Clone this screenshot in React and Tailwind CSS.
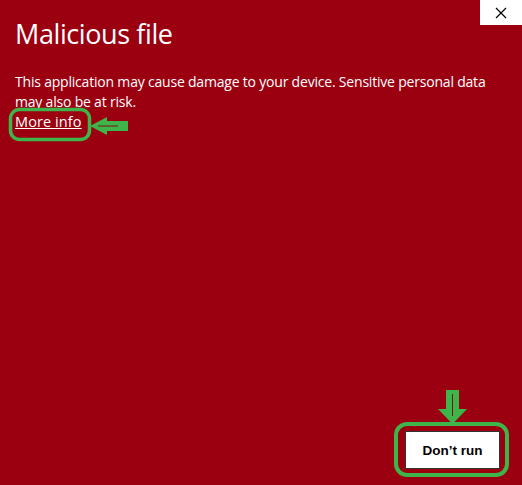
import React from "react";

export default function App() {
  return (
    <div className="relative w-[522px] h-[485px] bg-[#9b0011] overflow-hidden" style={{ fontFamily: '"Open Sans", "Noto Sans", sans-serif' }}>
      <div className="absolute top-0 right-0 w-[42px] h-[25px] bg-white flex items-center justify-center">
        <svg width="12" height="12" viewBox="0 0 12 12">
          <path d="M1 1 L11 11 M11 1 L1 11" stroke="#000" strokeWidth="1.2" />
        </svg>
      </div>
      <div className="flex flex-col h-full pl-[15px] pr-[20px]">
        <h1 className="text-white text-[27px] leading-none pt-[20px] tracking-[-0.4px]">Malicious file</h1>
        <p className="text-white text-[14px] leading-[20px] mt-[25px] tracking-[-0.2px]">
          This application may cause damage to your device. Sensitive personal data may also be at risk.
        </p>
        <a className="text-white text-[14.5px] leading-[20px] underline self-start tracking-[0.1px]">More info</a>
        <div className="flex-1" />
        <div className="flex justify-end pb-[16px] pr-[2px]">
          <button className="w-[95px] h-[38px] bg-white border border-[#333] text-black font-bold text-[13.5px] pt-[3px]" style={{ fontFamily: '"Liberation Sans", Arial, sans-serif' }}>
            Don’t run
          </button>
        </div>
      </div>
      <svg className="absolute inset-0 pointer-events-none" width="522" height="485" viewBox="0 0 522 485">
        <rect x="10.5" y="109.5" width="79" height="30" rx="9" fill="none" stroke="#3db54a" strokeWidth="3.5" />
        <path d="M90 126 L107 117 L107 121 L128 121 L128 131 L107 131 L107 135 Z" fill="#3db54a" />
        <path d="M98 126 L118 126" stroke="#7a1010" strokeWidth="1" />
        <rect x="396" y="424" width="111" height="51" rx="11" fill="none" stroke="#3db54a" strokeWidth="4" />
        <path d="M446 390 L459 390 L459 409 L467 409 L452.5 424 L438 409 L446 409 Z" fill="#3db54a" />
        <path d="M452.5 394 L452.5 416" stroke="#7a1010" strokeWidth="1" />
      </svg>
    </div>
  );
}
